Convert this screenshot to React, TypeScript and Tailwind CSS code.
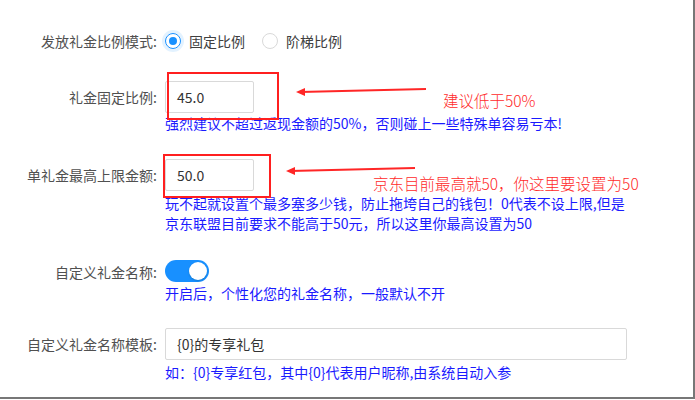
import React from 'react';

const font = { fontFamily: '"Noto Sans CJK SC", "Noto Sans", sans-serif' };

function Label(props: { text: string; h: string }) {
  return (
    <div className={`w-[165px] shrink-0 flex items-center justify-end pr-[8px] text-[14px] text-[#505050] ${props.h}`}>
      {props.text}:
    </div>
  );
}

function Help(props: { children: React.ReactNode; className?: string }) {
  return <div className={`text-[14px] leading-[20px] text-[#1a1aff] ${props.className || ''}`}>{props.children}</div>;
}

function Radio(props: { checked?: boolean; text: string }) {
  return (
    <label className="flex items-center mr-[17px]">
      {props.checked ? (
        <span className="w-[16px] h-[16px] rounded-full border border-[#1890ff] flex items-center justify-center shadow-[0_0_0_3px_rgba(24,144,255,0.12)]">
          <span className="w-[8px] h-[8px] rounded-full bg-[#1890ff]" />
        </span>
      ) : (
        <span className="w-[16px] h-[16px] rounded-full border border-[#d9d9d9] bg-white" />
      )}
      <span className="ml-[8px] text-[14px] text-[#404040]">{props.text}</span>
    </label>
  );
}

function Input(props: { value: string; w: string }) {
  return (
    <div className={`h-[32px] ${props.w} border border-[#d9d9d9] rounded-[2px] bg-white flex items-center pl-[11px] text-[14px] text-[#333]`}>
      {props.value}
    </div>
  );
}

export default function App() {
  return (
    <div className="relative w-[695px] h-[399px] bg-white border-r-2 border-b-2 border-[#777] overflow-hidden" style={font}>
      <div className="pt-[25px]">
        {/* 发放模式 */}
        <div className="flex">
          <Label text="发放礼金比例模式" h="h-[32px]" />
          <div className="flex items-center h-[32px]">
            <Radio checked text="固定比例" />
            <Radio text="阶梯比例" />
          </div>
        </div>

        {/* 固定比例 */}
        <div className="flex mt-[24px]">
          <Label text="礼金固定比例" h="h-[32px]" />
          <div>
            <Input value="45.0" w="w-[89px]" />
            <Help>强烈建议不超过返现金额的50%，否则碰上一些特殊单容易亏本!</Help>
          </div>
        </div>

        {/* 上限金额 */}
        <div className="flex mt-[26px]">
          <Label text="单礼金最高上限金额" h="h-[32px]" />
          <div>
            <Input value="50.0" w="w-[89px]" />
            <Help className="mt-[2px]">
              玩不起就设置个最多塞多少钱，防止拖垮自己的钱包！0代表不设上限,但是
              <br />
              京东联盟目前要求不能高于50元，所以这里你最高设置为50
            </Help>
          </div>
        </div>

        {/* 自定义名称 */}
        <div className="flex mt-[27px]">
          <Label text="自定义礼金名称" h="h-[24px]" />
          <div>
            <div className="w-[44px] h-[22px] rounded-full bg-[#1890ff] flex items-center justify-end pr-[2px]">
              <span className="w-[18px] h-[18px] rounded-full bg-white shadow-[0_1px_2px_rgba(0,35,11,0.2)]" />
            </div>
            <Help className="mt-[1px]">开启后，个性化您的礼金名称，一般默认不开</Help>
          </div>
        </div>

        {/* 模板 */}
        <div className="flex mt-[25px]">
          <Label text="自定义礼金名称模板" h="h-[32px]" />
          <div>
            <Input value="{0}的专享礼包" w="w-[462px]" />
            <Help className="mt-[2px]">如：{'{0}'}专享红包，其中{'{0}'}代表用户昵称,由系统自动入参</Help>
          </div>
        </div>
      </div>

      {/* annotations */}
      <div className="absolute left-[167px] top-[72px] w-[112px] h-[48px] border-2 border-[#ff1f1f]" />
      <div className="absolute left-[163px] top-[154px] w-[108px] h-[44px] border-2 border-[#ff1f1f]" />
      <svg className="absolute left-0 top-0 pointer-events-none" width="695" height="400">
        <line x1="300" y1="92" x2="426" y2="89" stroke="#ff2626" strokeWidth="2" />
        <polygon points="296,92 305,88 305,96" fill="#ff2626" />
        <line x1="290" y1="171" x2="415" y2="168" stroke="#ff2626" strokeWidth="2" />
        <polygon points="286,171 295,167 295,175" fill="#ff2626" />
      </svg>
      <div className="absolute left-[443px] top-[90px] text-[15.5px] leading-[20px] text-[#ff2a2a] font-light">建议低于50%</div>
      <div className="absolute left-[373px] top-[173px] text-[15.5px] leading-[20px] text-[#ff2a2a] font-light">京东目前最高就50，你这里要设置为50</div>
    </div>
  );
}
